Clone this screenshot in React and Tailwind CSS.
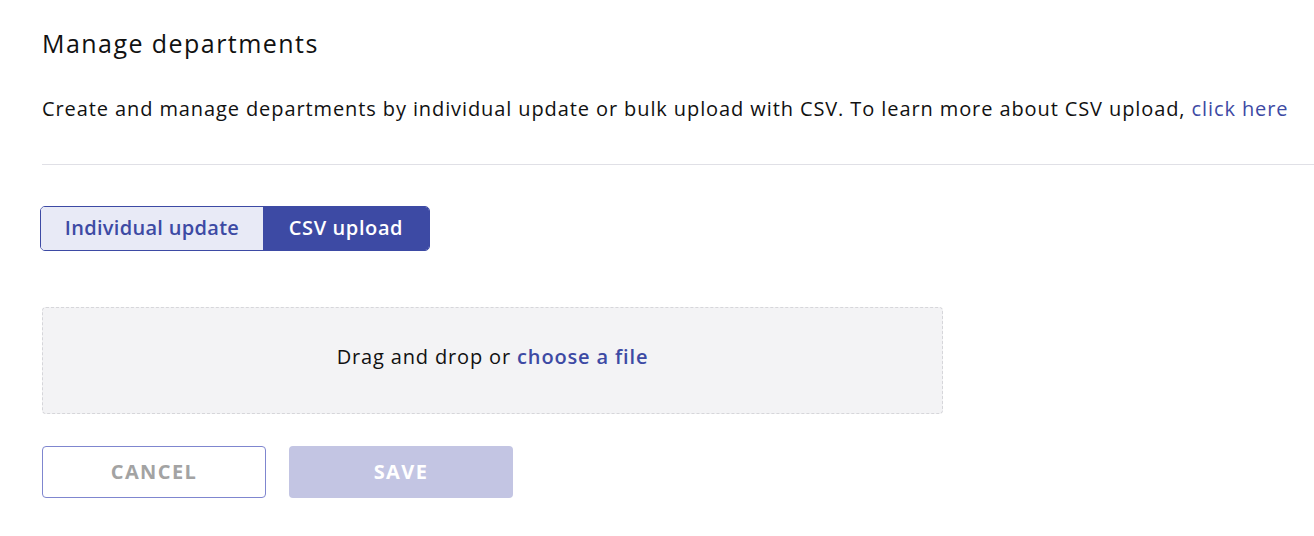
import { useState } from 'react';

export default function App() {
  const [mode, setMode] = useState('csv');

  return (
    <div className="min-h-[536px] bg-white text-[#111] font-['Open_Sans','Liberation_Sans',sans-serif]">
      <div className="pt-[26px] pl-[42px]">
        <h1 className="text-[25px] leading-[34px] font-normal tracking-[1.45px]">Manage departments</h1>
        <p className="mt-[35px] text-[20px] leading-[28px] tracking-[0.9px]">
          Create and manage departments by individual update or bulk upload with CSV. To learn more about CSV upload,{' '}
          <a href="#" className="text-[#3d4aa4]">click here</a>
        </p>
        <div className="mt-[41px] h-px bg-[#e0e0e6]" />

        <div className="mt-[41px] -ml-[2px] flex w-[390px] h-[45px] rounded-[5px] border border-[#3d4aa4] overflow-hidden">
          <button
            onClick={() => setMode('individual')}
            className={`w-[222px] pb-[1px] text-[20px] font-semibold tracking-[0.3px] ${mode === 'individual' ? 'bg-[#3d4aa4] text-white' : 'bg-[#e8eaf6] text-[#3d4aa4]'}`}
          >
            Individual update
          </button>
          <button
            onClick={() => setMode('csv')}
            className={`flex-1 pb-[1px] text-[20px] font-semibold tracking-[0.6px] ${mode === 'csv' ? 'bg-[#3d4aa4] text-white' : 'bg-[#e8eaf6] text-[#3d4aa4]'}`}
          >
            CSV upload
          </button>
        </div>

        <div className="mt-[56px] w-[901px] h-[107px] pb-[8px] flex items-center justify-center rounded-[4px] border border-dashed border-[#d6d6da] bg-[#f3f3f5] text-[20px] tracking-[0.85px]">
          <span>
            Drag and drop or <a href="#" className="font-semibold text-[#3d4aa4]">choose a file</a>
          </span>
        </div>

        <div className="mt-[32px] flex gap-[23px]">
          <button className="w-[224px] h-[52px] rounded-[4px] border border-[#7f86cf] bg-white text-[20px] font-bold tracking-[1.4px] text-[#a3a3a3]">
            CANCEL
          </button>
          <button className="w-[224px] h-[52px] rounded-[4px] bg-[#c3c5e3] text-[20px] font-bold tracking-[1.4px] text-white">
            SAVE
          </button>
        </div>
      </div>
    </div>
  );
}
